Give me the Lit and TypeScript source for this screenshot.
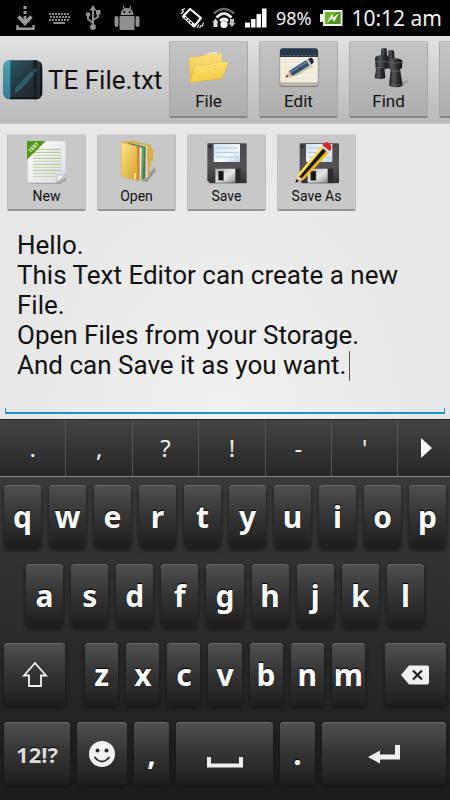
import { LitElement, html, css, svg, nothing, type TemplateResult } from "lit";
import { customElement, property, state } from "lit/decorators.js";
import { classMap } from "lit/directives/class-map.js";

const icon = (box: string, body: unknown) =>
  html`<svg viewBox=${box} aria-hidden="true">${body}</svg>`;

const floppy = (x: number) => svg`
  <g transform="translate(${x} 0)">
    <ellipse cx="66" cy="129" rx="60" ry="4" fill="#888" opacity=".6"/>
    <path d="M9 10H122Q125 10 125 13V129H15L7 121V12Q7 10 9 10Z" fill="url(#disk)"/>
    <rect x="11" y="16" width="7" height="8" fill="#222"/>
    <rect x="26" y="12" width="79" height="54" fill="url(#lbl)"/>
    <path d="M31 24H99M31 37H99M31 51H99" stroke="#a9c6dd" stroke-width="3"/>
    <rect x="31" y="86" width="76" height="43" fill="#2c2a2c"/>
    <rect x="31" y="86" width="60" height="42" fill="url(#shut)"/>
    <rect x="40" y="93" width="16" height="28" fill="#141414" stroke="#777" stroke-width="2"/>
  </g>`;

const diskDefs = svg`<defs>
  <linearGradient id="disk" x1="0" y1="0" x2="0" y2="1"><stop offset="0" stop-color="#4a484b"/><stop offset=".6" stop-color="#555256"/><stop offset="1" stop-color="#343134"/></linearGradient>
  <linearGradient id="lbl" x1="0" y1="0" x2="1" y2="1"><stop offset="0" stop-color="#cfe2f2"/><stop offset=".6" stop-color="#f4faff"/><stop offset="1" stop-color="#b9d3e8"/></linearGradient>
  <linearGradient id="shut" x1="0" y1="0" x2="1" y2="1"><stop offset="0" stop-color="#b5b5b5"/><stop offset=".55" stop-color="#e6e6e6"/><stop offset="1" stop-color="#8f8f8f"/></linearGradient>
</defs>`;

const toolIcons: Record<string, TemplateResult | typeof nothing> = {
  more: nothing,
  file: icon("0 0 132 132", svg`
    <defs>
      <linearGradient id="fb" x1="0" y1="0" x2="0" y2="1"><stop offset="0" stop-color="#fae079"/><stop offset="1" stop-color="#e6bb3e"/></linearGradient>
      <linearGradient id="ff" x1="0" y1="0" x2=".3" y2="1"><stop offset="0" stop-color="#fbe37a"/><stop offset="1" stop-color="#f6cd43"/></linearGradient>
    </defs>
    <path d="M60 17L100 13L102 34H62Z" fill="#f4f7fa" stroke="#a9b4c0" stroke-width="1.5"/>
    <rect x="92" y="16" width="5" height="8" fill="#2f7fc4"/>
    <path d="M6 34Q6 31 9 31L50 26L55 22L102 19Q105 19 105 23V80L11 107Q6 80 6 34Z" fill="url(#fb)" stroke="#d9ae3c" stroke-width="1"/>
    <path d="M9 107L21 62Q22 58 26 58L72 53L80 47L122 45Q125 46 123 50L107 90Q106 94 102 95Z" fill="url(#ff)" stroke="#d8ac38" stroke-width="1.5"/>
    <path d="M24 60L73 55L81 49L121 47" fill="none" stroke="#fff3b0" stroke-width="1.5"/>`),
  edit: icon("0 0 132 132", svg`
    <rect x="8" y="10" width="116" height="110" rx="8" fill="#7d7a70"/>
    <rect x="9" y="8" width="114" height="109" rx="8" fill="#bdb9a8"/>
    <path d="M10 30H122V100Q122 106 116 106H16Q10 106 10 100Z" fill="#f5f0df"/>
    <path d="M12 46H120M12 62H120M12 78H120M12 94H120" stroke="#dcd6c2" stroke-width="1.5"/>
    <path d="M26 31V105" stroke="#ecc9b8" stroke-width="1.5"/>
    <path d="M9 30V12Q9 4 17 4H115Q123 4 123 12V30Z" fill="#27384a"/>
    <path d="M12 25H121" stroke="#8796a5" stroke-width="2" stroke-dasharray="2 2"/>
    <path d="M26 92L60 86L108 57L104 52Z" fill="#b9b29d" opacity=".7"/>
    <path d="M26 91L36 72L46 87Z" fill="#e6b98a"/>
    <path d="M26 91L30 83L34 89Z" fill="#222"/>
    <path d="M36 72L88 39L98 55L46 87Z" fill="#34516f"/>
    <path d="M39 77L91 44" stroke="#6c8aa8" stroke-width="4"/>
    <path d="M88 39L93 36L103 52L98 55Z" fill="#c9ced3"/>
    <path d="M93 36L101 32Q106 31 109 38Q111 46 108 49L103 52Z" fill="#23262a"/>`),
  find: icon("0 0 132 132", svg`
    <defs><linearGradient id="bn" x1="0" y1="0" x2="1" y2="0"><stop offset="0" stop-color="#191b1d"/><stop offset=".35" stop-color="#54585b"/><stop offset=".65" stop-color="#2a2d2f"/><stop offset="1" stop-color="#111"/></linearGradient></defs>
    <path d="M80 118L122 98L122 104L100 121Z" fill="#777" opacity=".5"/>
    <path d="M43 5Q51 1 59 5L60 26H42Z" fill="url(#bn)"/>
    <path d="M42 24H60L66 34V62L56 66H26L24 34Q26 26 42 24Z" fill="url(#bn)"/>
    <path d="M28 60H52L55 93Q40 100 23 93Z" fill="url(#bn)"/>
    <path d="M24 44H62M27 62H54" stroke="#6c7073" stroke-width="2"/>
    <path d="M64 11Q73 7 81 11L83 38H64Z" fill="url(#bn)"/>
    <path d="M58 42Q62 34 84 34Q104 35 106 43L105 64Q84 74 62 64Z" fill="url(#bn)"/>
    <path d="M71 66H99L107 116Q88 125 66 116Z" fill="url(#bn)"/>
    <path d="M60 45Q84 52 105 45M70 71Q86 76 100 71M69 112Q88 119 105 112" stroke="#6c7073" stroke-width="2" fill="none"/>`),
  new: icon("0 0 132 132", svg`
    <defs><linearGradient id="pg" x1="0" y1="0" x2="1" y2="1"><stop offset="0" stop-color="#fff"/><stop offset="1" stop-color="#dcdce4"/></linearGradient></defs>
    <path d="M10 128H96L124 112V122L104 132H18Z" fill="#777" opacity=".45"/>
    <path d="M8 7Q8 3 12 3H119Q122 3 122 7V104L93 128H12Q8 128 8 124Z" fill="url(#pg)" stroke="#c5c5cf"/>
    <path d="M24 28H108M24 37H108M24 55H108M24 73H108M24 91H108" stroke="#9dbb70" stroke-width="2.5"/>
    <path d="M24 46H108M24 64H108M24 82H108M24 100H92M24 109H92" stroke="#b6cf8f" stroke-width="2.5"/>
    <path d="M93 128L99 103Q110 108 122 104Z" fill="#f6f6fa" stroke="#8f8f99" stroke-width="1.5"/>
    <path d="M6 3H61L6 58Z" fill="#4f9a10"/>
    <path d="M61 3L6 58" stroke="#387507" stroke-width="2"/>
    <text x="27" y="29" transform="rotate(-45 24 24)" text-anchor="middle" font-family="Roboto, sans-serif" font-size="15" font-weight="700" fill="#fff">TEXT</text>`),
  open: icon("0 0 132 132", svg`
    <defs><linearGradient id="of" x1="0" y1="0" x2="1" y2="1"><stop offset="0" stop-color="#fbe78f"/><stop offset="1" stop-color="#d59f22"/></linearGradient></defs>
    <path d="M80 124L120 82L122 92L96 126Z" fill="#666" opacity=".5"/>
    <path d="M18 6L52 4L108 16V30H112V62H106L102 112L90 114Z" fill="#e2b53b" stroke="#b98d22"/>
    <path d="M30 7L96 18L97 114L88 117L80 28Z" fill="#d6dbdf"/>
    <path d="M40 8L92 20L91 114L84 118Z" fill="#5c656b"/>
    <path d="M42 12L88 22L84 119L74 120Z" fill="#43b25a"/>
    <path d="M46 14L80 24L78 118L70 120Z" fill="#e9f4ea"/>
    <path d="M40 12L74 22L74 120L66 122Z" fill="#f0713a"/>
    <path d="M18 6L62 18Q66 19 66 24L69 123L19 108Z" fill="url(#of)" stroke="#c99a2b"/>
    <rect x="100" y="26" width="11" height="34" rx="3" fill="none" stroke="#d9ab32" stroke-width="4"/>
    <path d="M60 100V118" stroke="#fff0b0" stroke-width="5"/>`),
  save: icon("0 0 132 132", svg`${diskDefs}${floppy(0)}`),
  saveas: icon("0 0 132 132", svg`${diskDefs}${floppy(7)}
    <path d="M1 129L7 105L26 119Z" fill="#f0cf9a"/>
    <path d="M1 129L4 117L13 123Z" fill="#222"/>
    <path d="M7 105L80 18L103 37L26 119Z" fill="#f5b90d"/>
    <path d="M7 105L80 18L86 23L12 109Z" fill="#ffe05a"/>
    <path d="M13 110L86 23L96 31L20 115Z" fill="#191919"/>
    <path d="M78 20L84 13L107 32L100 40Z" fill="#d8d8d8"/>
    <path d="M82 15Q90 3 103 9Q115 20 105 34Z" fill="#d7262b"/>`),
};

const statusIcons = {
  download: icon("0 0 26 36", svg`<g fill="none" stroke="#9a9a9a" stroke-width="3"><path d="M13 6V9M13 11V14M13 16V24"/><path d="M6.500 16.500L13 23.500L19.500 16.500" stroke-width="3.500"/><path d="M5.500 25V28.700H21.500V25" stroke-width="2.400"/></g>`),
  keyboard: icon("0 0 26 36", svg`<g stroke="#8c8c8c" stroke-width="2" fill="none"><path d="M3 14H24" stroke-dasharray="2 1"/><path d="M4 17H24" stroke-dasharray="2 1"/><path d="M3 20H24" stroke-dasharray="2 1"/><path d="M7.500 23H19"/></g>`),
  usb: icon("0 0 26 36", svg`<g stroke="#8f8f8f" stroke-width="2" fill="none"><path d="M13 9V26M13 23L8 19V15M13 20L18 17V13"/></g><g fill="#8f8f8f"><path d="M13 5L16.500 10.500H9.500Z"/><circle cx="13" cy="27" r="3"/><circle cx="8" cy="14.500" r="2.300"/><rect x="16" y="10" width="4.500" height="4.500"/></g>`),
  android: icon("0 0 26 36", svg`<g fill="#8f8f8f"><path d="M6.500 15Q7 8 13 8Q19 8 19.500 15Z"/><path d="M9 6L11 9.500M17 6L15 9.500" stroke="#8f8f8f" stroke-width="1.200"/><rect x="5.500" y="16" width="15" height="14"/><rect x="0.500" y="16" width="4" height="11" rx="2"/><rect x="21.500" y="16" width="4" height="11" rx="2"/></g><circle cx="10.300" cy="12" r="1" fill="#000"/><circle cx="15.700" cy="12" r="1" fill="#000"/>`),
  vibrate: icon("0 0 24 36", svg`<path d="M10 9L21 18L14 26.500L3 16.500Z" fill="none" stroke="#fff" stroke-width="2.200" stroke-linejoin="round"/><path d="M4 14.500L2.500 17L13.500 27L15.500 24.500Z" fill="#fff"/><path d="M5 17.500L13 24.500" stroke="#000" stroke-width="1.500" stroke-dasharray="2 1.500"/><path d="M1 14L3.500 11.500L2 10L5 8.500M19.500 28L21 25.500L22.500 26L23.500 22.500M17 28L19 24.500" stroke="#ddd" stroke-width="1.300" fill="none"/>`),
  wifi: icon("0 0 24 36", svg`<g fill="none" stroke-width="2.600"><path d="M2 13.500Q12 4.500 22 13.500" stroke="#666"/><path d="M4.500 17.500Q12 9.500 19.500 17.500" stroke="#fff"/><path d="M8 21Q12 17 16 21" stroke="#fff"/></g><circle cx="12" cy="24.500" r="3.600" fill="#fff"/><path d="M3.500 18.500L6.500 22.500H5.500V27H1.500V22.500H0.500Z" fill="#ddd"/><path d="M20 27L16.500 23H18V19H22V23H23.500Z" fill="#bbb"/>`),
  signal: icon("0 0 24 36", svg`<path d="M1 22.500H6V27.500H1ZM7 19H11.500V27.500H7ZM12.500 14H17V27.500H12.500ZM18 8.500H22.500V27.500H18Z" fill="#fff"/>`),
  battery: icon("0 0 24 36", svg`<path d="M4 10H23.500V26H4V22H1V14H4Z" fill="#f2f2f2"/><rect x="6" y="12" width="15.500" height="12" fill="#6cb52d"/><path d="M17.500 12H21.500V24H9Z" fill="#4f9418"/><path d="M8 22.500L13 14L14.500 17.500L20 13L15 22L13 18.500Z" fill="#fff"/>`),
};

const appIcon = icon("0 0 120 120", svg`
  <defs><linearGradient id="sp" x1="0" y1="0" x2="0" y2="1"><stop offset="0" stop-color="#4aa5b8"/><stop offset="1" stop-color="#2f7f96"/></linearGradient>
  <linearGradient id="cv" x1="0" y1="0" x2="1" y2="1"><stop offset="0" stop-color="#2b5f6b"/><stop offset=".5" stop-color="#25363e"/><stop offset="1" stop-color="#202326"/></linearGradient>
  <clipPath id="rd"><rect x="1" y="1" width="117" height="117" rx="20"/></clipPath></defs>
  <g clip-path="url(#rd)"><rect width="120" height="120" fill="url(#cv)"/><rect width="22" height="120" fill="url(#sp)"/>
  <rect x="91" width="11" height="120" fill="#1a1f22"/><path d="M115 0V115H22" fill="none" stroke="#0c0e0f" stroke-width="5"/>
  <path d="M34 99L39 82L86 33L95 41L49 92Z" fill="#2f6270"/><path d="M39 82L49 92M44 86L90 37" stroke="#1f3e48" stroke-width="2"/><path d="M88 31L96 24L104 31L97 39Z" fill="#2b4d58"/></g>`);

const keyIcons: Record<string, TemplateResult> = {
  shift: icon("0 0 28 28", svg`<path d="M14 2L25 14.500H20V25H8V14.500H3Z" fill="none" stroke="#f4f4f4" stroke-width="1.800"/>`),
  erase: icon("0 0 28 28", svg`<path d="M0 14L8 4.500H26Q28 4.500 28 6.500V21.500Q28 23.500 26 23.500H8Z" fill="#f0f0f0"/><path d="M12 9.500L21 18.500M21 9.500L12 18.500" stroke="#222" stroke-width="2.200"/>`),
  smile: icon("0 0 28 28", svg`<circle cx="14" cy="14" r="13" fill="#f3f3f3"/><circle cx="9.500" cy="10.500" r="2" fill="#292929"/><circle cx="18.500" cy="10.500" r="2" fill="#292929"/><path d="M6.500 17Q14 26 21.500 17" fill="none" stroke="#292929" stroke-width="1.800"/>`),
  space: icon("0 0 36 28", svg`<path d="M2 17V25.500H34V17" fill="none" stroke="#f0f0f0" stroke-width="4"/>`),
  enter: icon("0 0 32 28", svg`<path d="M0 17L12 10.500V14.500H27V5H32V19.500H12V23.500Z" fill="#f0f0f0"/>`),
  next: icon("0 0 28 28", svg`<path d="M11 4L22 14L11 24Z" fill="#f5f5f5"/>`),
};

@customElement("tool-button")
class ToolButton extends LitElement {
  @property() icon = "more";
  @property() label = "";
  @property({ type: Boolean }) large = false;

  static styles = css`
    :host { display: block; flex: none; width: 79px; }
    .tool {
      display: flex; flex-direction: column; align-items: center;
      box-sizing: border-box; width: 100%; height: 77px; margin: 0; padding: 5px 0 0;
      border: 1px solid #bdbdbd; border-top-color: #d2d2d2; border-bottom: 2px solid #959595; border-radius: 2px;
      background: #c8c8c8; color: #111;
      font: 14px/20px Roboto, sans-serif;
    }
    .large {
      background: linear-gradient(#c5c5c5, #adadad); border-color: #a8a8a8;
      border-top-color: #bcbcbc; border-bottom-color: #858585; font-size: 17px;
    }
    .glyph { width: 44px; height: 44px; }
    .glyph svg { display: block; width: 100%; height: 100%; }
    .label { margin-top: 2px; }
    .large .label { margin-top: 0; }
  `;

  render() {
    return html`<button class=${classMap({ tool: true, large: this.large })} aria-label=${this.label || "More"}>
      <span class="glyph">${toolIcons[this.icon]}</span><span class="label">${this.label}</span>
    </button>`;
  }
}

@customElement("app-root")
class AppRoot extends LitElement {
  @state() private text =
    "Hello.\nThis Text Editor can create a new File.\nOpen Files from your Storage.\nAnd can Save it as you want.";

  static styles = css`
    :host {
      display: flex; flex-direction: column; min-height: 100vh; overflow: hidden;
      background: #e8e8e8; font-family: Roboto, sans-serif; color: #111;
    }
    button { margin: 0; padding: 0; border: 0; font-family: inherit; color: inherit; }

    .status {
      display: flex; justify-content: space-between; height: 36px; padding: 0 8px 0 12px;
      background: #000; color: #f2f2f2; line-height: 36px; font-family: "Noto Sans", sans-serif;
    }
    .group { display: flex; gap: 8px; }
    .status svg { display: block; height: 36px; }
    .percent { font-size: 18px; }
    .clock { font-size: 21px; }

    .bar {
      display: flex; align-items: center; gap: 11px; height: 88px; box-sizing: border-box; padding: 0 0 0 3px;
      overflow: hidden; background: linear-gradient(#e2e2e2, #b9b9b9); border-bottom: 1px solid #c8c8c8;
    }
    .brand { display: flex; align-items: center; flex: none; width: 155px; gap: 5px; }
    .brand svg { width: 40px; height: 40px; flex: none; }
    .title { margin: 0; font-size: 26px; line-height: 32px; font-weight: 400; white-space: nowrap; }

    .tools { display: flex; gap: 11px; padding: 10px 7px 0; }

    .editor { position: relative; display: flex; flex: 1; margin: 10px 5px 5px; }
    .field {
      flex: 1; min-width: 0; box-sizing: border-box; margin: 0; padding: 9px 12px 0; border: 0; outline: 0;
      resize: none; overflow: hidden; background: transparent; color: #111;
      font: 26px/30px Roboto, sans-serif;
    }
    .frame {
      position: absolute; inset: auto 0 0; height: 6px; box-sizing: border-box; pointer-events: none;
      border: 1px solid #1c93cf; border-width: 0 1px 2px;
    }
    .caret { position: absolute; left: 344px; top: 130px; width: 1px; height: 30px; background: #555; }
    .page {
      display: flex; flex-direction: column; flex: 1;
      background: radial-gradient(ellipse at 50% 100%, #f1f1f1, #e7e7e7 70%);
    }

    .keyboard {
      background: linear-gradient(#404040, #2c2c2c 55%, #1c1c1c);
      color: #fff; font-family: "Noto Sans", sans-serif; padding-bottom: 7px;
    }
    .hints { display: flex; height: 58px; box-sizing: border-box; border-top: 1px solid #222; border-bottom: 1px solid #858585; }
    .hint {
      flex: 66; min-width: 0; border-right: 1px solid #555;
      background: linear-gradient(#444, #262626); font-size: 24px; line-height: 56px; color: #eee;
    }
    .next { flex: 52; border-right: 0; display: grid; place-items: center; }
    .keys { display: flex; gap: 8px; padding: 8px 4px; }
    .keys.home { padding: 8px 26px; }
    .keys.bottom { gap: 7px; }
    .letters { display: flex; flex: 279; gap: 8px; margin: 0 12px; }
    .key {
      flex: 1 1 0; min-width: 0; height: 63px; border-radius: 4px;
      background: linear-gradient(#505050, #363636 45%, #1e1e1e);
      box-shadow: 0 2px 4px #151515, inset 0 1px 0 #6a6a6a;
      font-size: 30px; font-weight: 700; line-height: 64px; text-align: center;
      text-shadow: 0 -1px 1px #000;
    }
    .key svg, .next svg { display: block; height: 28px; margin: 0 auto; }
    .w35 { flex-grow: 35; }
    .w50 { flex-grow: 50; }
    .w61 { flex-grow: 61; }
    .w66 { flex-grow: 66; font-size: 22px; color: #ddd; }
    .w97 { flex-grow: 97; }
    .w124 { flex-grow: 124; }
  `;

  private letters(chars: string) {
    return [...chars].map((c) => html`<button class="key">${c}</button>`);
  }

  render() {
    return html`
      <header class="status">
        <div class="group">${statusIcons.download}${statusIcons.keyboard}${statusIcons.usb}${statusIcons.android}</div>
        <div class="group">
          ${statusIcons.vibrate}${statusIcons.wifi}${statusIcons.signal}
          <span class="percent">98%</span>${statusIcons.battery}<span class="clock">10:12 am</span>
        </div>
      </header>
      <nav class="bar">
        <div class="brand">${appIcon}<h1 class="title">TE File.txt</h1></div>
        <tool-button large icon="file" label="File"></tool-button>
        <tool-button large icon="edit" label="Edit"></tool-button>
        <tool-button large icon="find" label="Find"></tool-button>
        <tool-button large></tool-button>
      </nav>
      <main class="page">
        <div class="tools">
          <tool-button icon="new" label="New"></tool-button>
          <tool-button icon="open" label="Open"></tool-button>
          <tool-button icon="save" label="Save"></tool-button>
          <tool-button icon="saveas" label="Save As"></tool-button>
        </div>
        <div class="editor">
          <textarea class="field" aria-label="File text" spellcheck="false" .value=${this.text}
            @input=${(e: Event) => (this.text = (e.target as HTMLTextAreaElement).value)}></textarea>
          <span class="caret"></span>
          <span class="frame"></span>
        </div>
      </main>
      <section class="keyboard" aria-label="Keyboard">
        <div class="hints">
          ${[".", ",", "?", "!", "-", "'"].map((c) => html`<button class="hint">${c}</button>`)}
          <button class="hint next" aria-label="More suggestions">${keyIcons.next}</button>
        </div>
        <div class="keys">${this.letters("qwertyuiop")}</div>
        <div class="keys home">${this.letters("asdfghjkl")}</div>
        <div class="keys">
          <button class="key w61" aria-label="Shift">${keyIcons.shift}</button>
          <div class="letters">${this.letters("zxcvbnm")}</div>
          <button class="key w61" aria-label="Delete">${keyIcons.erase}</button>
        </div>
        <div class="keys bottom">
          <button class="key w66">12!?</button>
          <button class="key w50" aria-label="Smileys">${keyIcons.smile}</button>
          <button class="key w35">,</button>
          <button class="key w97" aria-label="Space">${keyIcons.space}</button>
          <button class="key w35">.</button>
          <button class="key w124" aria-label="Enter">${keyIcons.enter}</button>
        </div>
      </section>
    `;
  }
}
